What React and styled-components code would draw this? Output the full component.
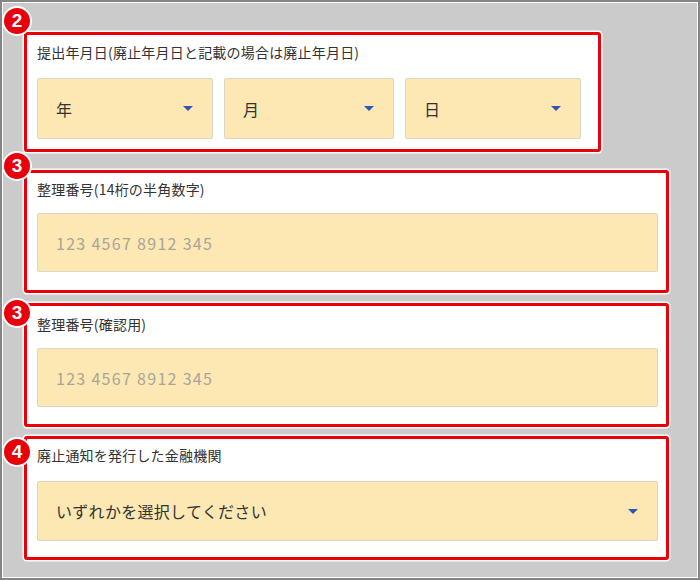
import React from 'react';
import styled, { createGlobalStyle } from 'styled-components';

const Global = createGlobalStyle`
  body { margin: 0; font-family: "Noto Sans CJK JP", "Noto Sans", sans-serif; }
`;

const Frame = styled.div`
  width: 700px;
  height: 580px;
  box-sizing: border-box;
  border: 2px solid #858585;
  background: #fff;
`;

const Inner = styled.div`
  height: 100%;
  box-sizing: border-box;
  border: 1px solid #fff;
  background: #cbcbcb;
  padding-top: 29px;
  display: flex;
  flex-direction: column;
`;

const Box = styled.section`
  position: relative;
  box-sizing: border-box;
  width: ${p => p.$w}px;
  height: ${p => p.$h}px;
  margin-left: 21px;
  margin-top: ${p => p.$mt}px;
  border: 3px solid #e8000b;
  border-radius: 3px;
  box-shadow: 0 0 0 1.5px #fff;
  background: #fff;
  padding: ${p => p.$pt}px 8px 0 10px;
  display: flex;
  flex-direction: column;
`;

const Badge = styled.div`
  position: absolute;
  left: -23px;
  top: ${p => p.$top}px;
  width: 26px;
  height: 26px;
  border-radius: 50%;
  background: #e8000b;
  box-shadow: 0 0 0 2px #fff;
  color: #fff;
  font-family: "Liberation Sans", Arial, sans-serif;
  font-weight: bold;
  font-size: 19px;
  display: flex;
  align-items: center;
  justify-content: center;
`;

const Label = styled.div`
  font-size: 14px;
  letter-spacing: 0.2px;
  color: #333;
  line-height: 20px;
`;

const Row = styled.div`
  display: flex;
  gap: 11px;
  margin-top: ${p => p.$mt}px;
`;

const Field = styled.div`
  box-sizing: border-box;
  width: ${p => (p.$w ? p.$w + 'px' : '100%')};
  height: ${p => p.$h}px;
  background: #fde8b3;
  border: 1px solid #dcd6c4;
  border-radius: 2px;
  display: flex;
  align-items: center;
  justify-content: space-between;
  padding: 0 19px 0 18px;
  font-size: 16px;
  letter-spacing: ${p => (p.$ph ? '1.3px' : '0.3px')};
  color: ${p => (p.$ph ? '#a9a49a' : '#333')};
`;

const Caret = styled.span`
  width: 0;
  height: 0;
  border-left: 5px solid transparent;
  border-right: 5px solid transparent;
  border-top: 5px solid #2b58b8;
`;

export default function App() {
  return (
    <Frame>
      <Global />
      <Inner>
        <Box $w={577} $h={120} $mt={0} $pt={7}>
          <Badge $top={-27}>2</Badge>
          <Label>提出年月日(廃止年月日と記載の場合は廃止年月日)</Label>
          <Row $mt={16}>
            <Field $w={176} $h={61}>年<Caret /></Field>
            <Field $w={170} $h={61}>月<Caret /></Field>
            <Field $w={176} $h={61}>日<Caret /></Field>
          </Row>
        </Box>
        <Box $w={645} $h={123} $mt={18} $pt={6}>
          <Badge $top={-20}>3</Badge>
          <Label>整理番号(14桁の半角数字)</Label>
          <Row $mt={14}>
            <Field $h={59} $ph>123 4567 8912 345</Field>
          </Row>
        </Box>
        <Box $w={645} $h={124} $mt={10} $pt={8}>
          <Badge $top={-6}>3</Badge>
          <Label>整理番号(確認用)</Label>
          <Row $mt={14}>
            <Field $h={59} $ph>123 4567 8912 345</Field>
          </Row>
        </Box>
        <Box $w={645} $h={124} $mt={9} $pt={6}>
          <Badge $top={0}>4</Badge>
          <Label>廃止通知を発行した金融機関</Label>
          <Row $mt={16}>
            <Field $h={60}>いずれかを選択してください<Caret /></Field>
          </Row>
        </Box>
      </Inner>
    </Frame>
  );
}
